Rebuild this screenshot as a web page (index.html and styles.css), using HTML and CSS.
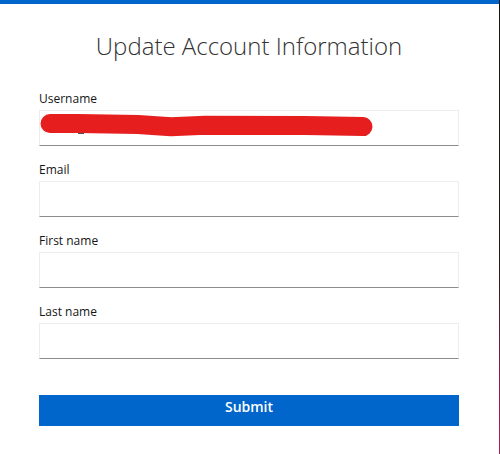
FILE: index.html
```html
<!DOCTYPE html>
<html lang="en">
<head>
<meta charset="utf-8">
<title>Update Account Information</title>
<link rel="stylesheet" href="styles.css">
</head>
<body>
<div class="page">
  <main class="card">
    <h1 class="title">Update Account Information</h1>
    <form class="form">
      <div class="group">
        <label class="label" for="username">Username</label>
        <div class="field">
          <input class="input" id="username" type="text">
          <svg class="redact" width="420" height="36" viewBox="0 0 420 36" aria-hidden="true">
            <rect x="39" y="22.6" width="6" height="1.2" fill="#1b2a3a"/>
            <rect x="156" y="22.6" width="6" height="1.2" fill="#1b2a3a"/>
            <path d="M11 13.6 L39 13.5 L99 14.4 L132 16.7 L166 15.3 L266 15.6 L324 16.6" fill="none" stroke="#e61e1e" stroke-width="19" stroke-linecap="round" stroke-linejoin="round"/>
          </svg>
        </div>
      </div>
      <div class="group">
        <label class="label" for="email">Email</label>
        <input class="input" id="email" type="text">
      </div>
      <div class="group">
        <label class="label" for="firstName">First name</label>
        <input class="input" id="firstName" type="text">
      </div>
      <div class="group">
        <label class="label" for="lastName">Last name</label>
        <input class="input" id="lastName" type="text">
      </div>
      <button class="submit" type="submit">Submit</button>
    </form>
  </main>
  <div class="edge"></div>
</div>
</body>
</html>
```
FILE: styles.css
```css
html, body {
  margin: 0;
  padding: 0;
  background: #ffffff;
}

.page {
  display: flex;
  width: 500px;
  height: 454px;
  overflow: hidden;
}

.card {
  width: 499px;
  box-sizing: border-box;
  border-top: 4px solid #0066cc;
  background: #ffffff;
  padding: 27px 40px 0 39px;
  font-family: "Open Sans", "Noto Sans", sans-serif;
}

.edge {
  flex: 1;
  background: linear-gradient(#15150f 0%, #1e1a12 55%, #8e1f4c 85%, #a0204f 100%);
}

.title {
  margin: 0;
  font-size: 24px;
  font-weight: 300;
  line-height: 30px;
  color: #333333;
  text-align: center;
}

.form {
  margin-top: 29px;
  width: 420px;
  display: flex;
  flex-direction: column;
}

.group {
  display: flex;
  flex-direction: column;
  margin-bottom: 15px;
}

.label {
  font-size: 12px;
  line-height: 18px;
  color: #151515;
  margin-bottom: 2px;
}

.field {
  position: relative;
  height: 36px;
}

.input {
  display: block;
  width: 420px;
  height: 36px;
  box-sizing: border-box;
  margin: 0;
  padding: 0 8px;
  border: 1px solid #ededed;
  border-bottom-color: #8a8d90;
  border-radius: 0;
  background: #ffffff;
  font-family: inherit;
  font-size: 14px;
  outline: none;
}

.redact {
  position: absolute;
  top: 0;
  left: 0;
}

.submit {
  margin-top: 21px;
  width: 420px;
  height: 31px;
  box-sizing: border-box;
  padding: 0 0 8px;
  border: none;
  border-radius: 0;
  background: #0066cc;
  color: #ffffff;
  font-family: "Open Sans", "Noto Sans", sans-serif;
  font-size: 14px;
  font-weight: 600;
  line-height: 23px;
}
```
